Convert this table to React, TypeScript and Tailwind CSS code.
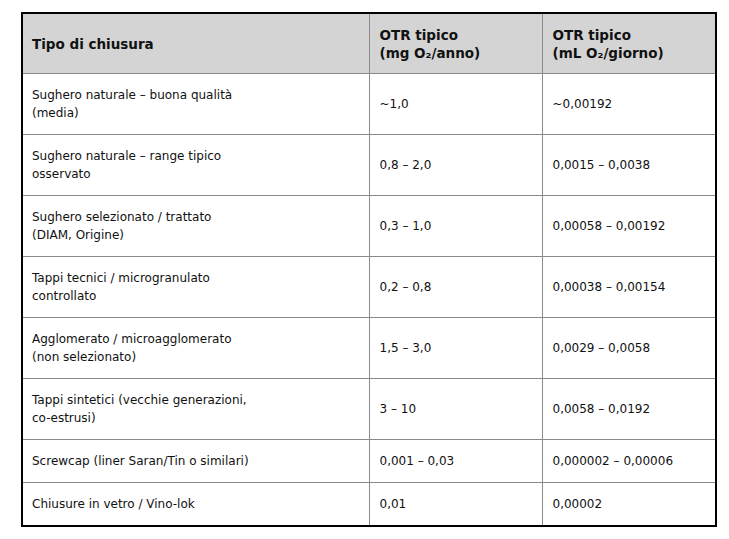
import React from "react";

type Row = { tipo: string[]; mg: string; ml: string };

const rows: Row[] = [
  { tipo: ["Sughero naturale – buona qualità", "(media)"], mg: "~1,0", ml: "~0,00192" },
  { tipo: ["Sughero naturale – range tipico", "osservato"], mg: "0,8 – 2,0", ml: "0,0015 – 0,0038" },
  { tipo: ["Sughero selezionato / trattato", "(DIAM, Origine)"], mg: "0,3 – 1,0", ml: "0,00058 – 0,00192" },
  { tipo: ["Tappi tecnici / microgranulato", "controllato"], mg: "0,2 – 0,8", ml: "0,00038 – 0,00154" },
  { tipo: ["Agglomerato / microagglomerato", "(non selezionato)"], mg: "1,5 – 3,0", ml: "0,0029 – 0,0058" },
  { tipo: ["Tappi sintetici (vecchie generazioni,", "co-estrusi)"], mg: "3 – 10", ml: "0,0058 – 0,0192" },
  { tipo: ["Screwcap (liner Saran/Tin o similari)"], mg: "0,001 – 0,03", ml: "0,000002 – 0,00006" },
  { tipo: ["Chiusure in vetro / Vino-lok"], mg: "0,01", ml: "0,00002" },
];

export default function App() {
  return (
    <div className="min-h-screen bg-white pt-[12px] pl-[21px] font-['DejaVu_Sans',sans-serif] text-[#111]">
      <table className="w-[694px] table-fixed border-collapse border-2 border-black text-[12px] leading-[18px]">
        <colgroup>
          <col className="w-[347px]" />
          <col className="w-[173px]" />
          <col className="w-[174px]" />
        </colgroup>
        <thead>
          <tr className="bg-[#d4d4d4]">
            <th className="border border-[#8a8a8a] px-[9px] pt-[12px] pb-[11px] text-left align-middle text-[13.5px] font-bold leading-[18px]">
              Tipo di chiusura
            </th>
            <th className="border border-[#8a8a8a] px-[10px] pt-[12px] pb-[11px] text-left align-middle text-[13.5px] font-bold leading-[18px]">
              OTR tipico
              <br />
              (mg O₂/anno)
            </th>
            <th className="border border-[#8a8a8a] px-[10px] pt-[12px] pb-[11px] text-left align-middle text-[13.5px] font-bold leading-[18px]">
              OTR tipico
              <br />
              (mL O₂/giorno)
            </th>
          </tr>
        </thead>
        <tbody>
          {rows.map((r, i) => (
            <tr key={i}>
              <td className="border border-[#8a8a8a] px-[9px] py-[12px] align-middle">
                {r.tipo.map((t, j) => (
                  <div key={j}>{t}</div>
                ))}
              </td>
              <td className="border border-[#8a8a8a] px-[10px] py-[12px] align-middle">{r.mg}</td>
              <td className="border border-[#8a8a8a] px-[10px] py-[12px] align-middle">{r.ml}</td>
            </tr>
          ))}
        </tbody>
      </table>
    </div>
  );
}
